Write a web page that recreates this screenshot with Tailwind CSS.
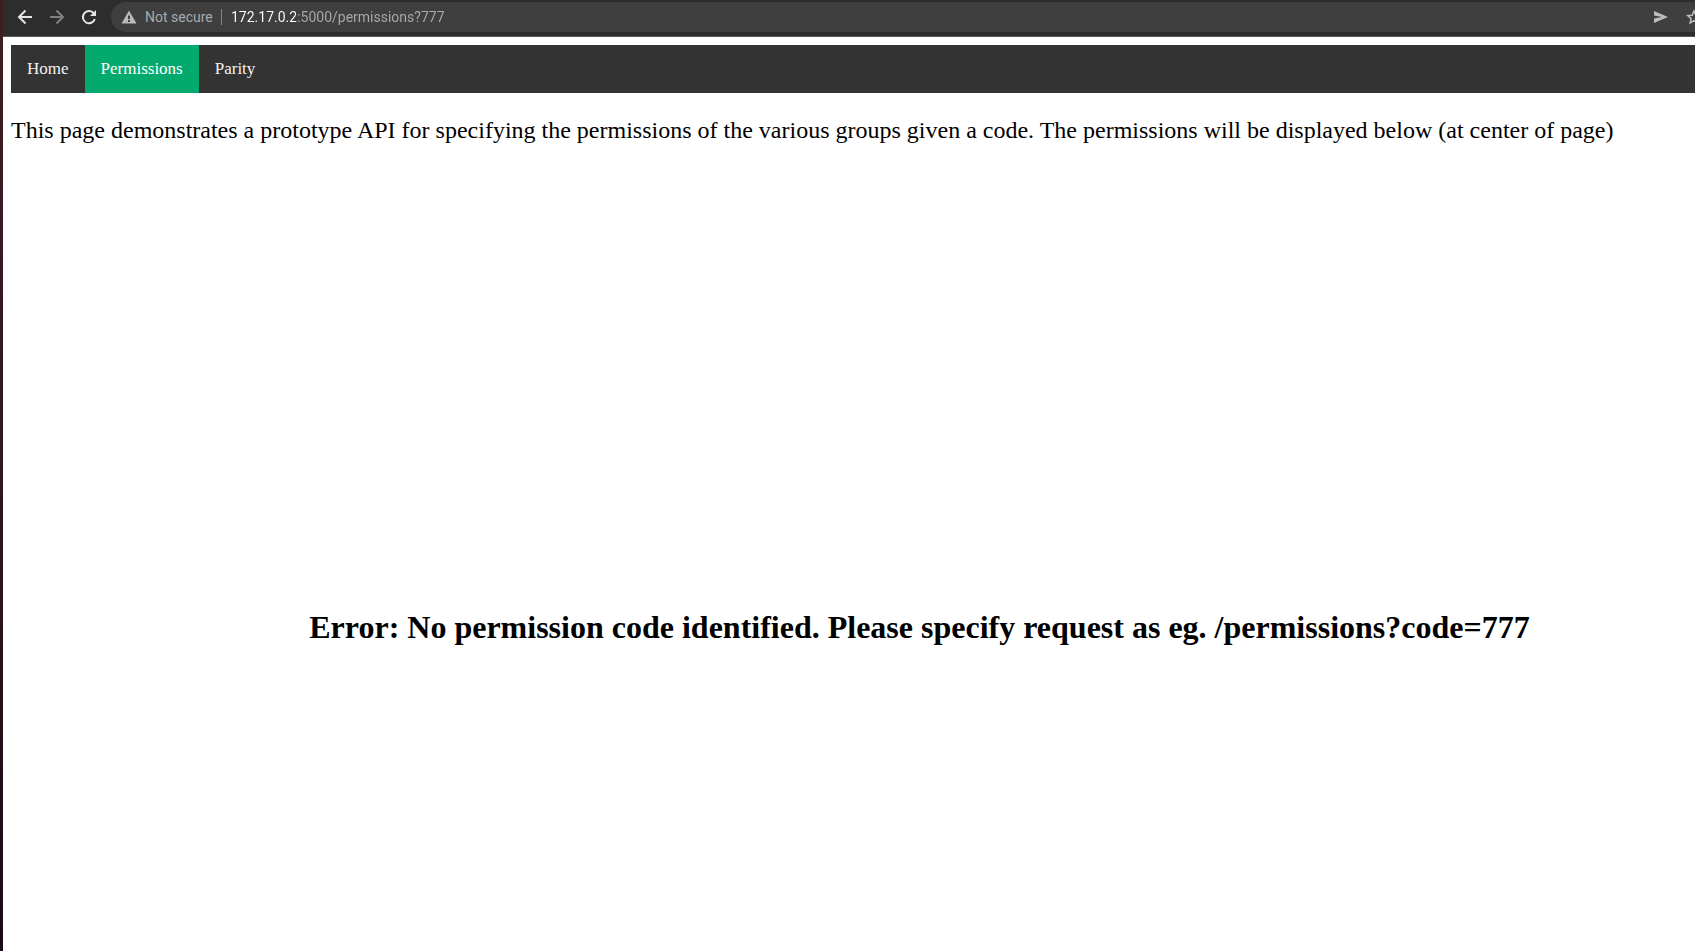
<!DOCTYPE html>
<html lang="en">
<head>
<meta charset="utf-8">
<title>Permissions</title>
<script src="https://cdn.jsdelivr.net/npm/@tailwindcss/browser@4"></script>
</head>
<body class="flex min-h-screen overflow-x-hidden bg-white font-['Liberation_Serif',serif] text-black">
  <div class="w-[3px] shrink-0 bg-linear-to-b from-[#401e20] via-[#32151f] to-[#180a18]"></div>
  <div class="flex min-w-0 flex-1 flex-col">
    <header class="flex h-[37px] items-start overflow-hidden border-b border-[#5a5a5a] bg-[#2d2d2d] pt-[2px] font-[Roboto,sans-serif] text-sm">
      <div class="flex h-[30px] shrink-0 items-center gap-3 pl-3">
        <button type="button" aria-label="Back" class="size-5 text-[#e4e4e4]">
          <svg viewBox="0 0 20 20" class="size-5" fill="none" stroke="currentColor" stroke-width="2"><path d="M17 10H4.500M10.500 3.500L4 10l6.500 6.500"/></svg>
        </button>
        <button type="button" aria-label="Forward" class="size-5 text-[#808080]">
          <svg viewBox="0 0 20 20" class="size-5" fill="none" stroke="currentColor" stroke-width="2"><path d="M3 10h12.500M9.500 3.500L16 10l-6.500 6.500"/></svg>
        </button>
        <button type="button" aria-label="Reload" class="size-5 text-[#e4e4e4]">
          <svg viewBox="0 0 20 20" class="size-5" fill="none" stroke="currentColor" stroke-width="2"><path d="M15.800 12a6.100 6.100 0 1 1-1.600-6.300L16 7.500"/><path d="M17 3v6h-6z" fill="currentColor" stroke="none"/></svg>
        </button>
      </div>
      <div class="ml-3 flex h-[30px] min-w-0 flex-1 items-center rounded-l-full bg-[#3f3f3f] pl-2.5">
        <svg viewBox="0 0 16 14" class="h-3.5 w-4 shrink-0 fill-[#b8babd]"><path fill-rule="evenodd" d="M8 .5L15.500 13.500H.5zM7 5.500v3.500h2V5.500zM7 10v2h2v-2z"/></svg>
        <span class="ml-2 w-[68px] shrink-0 whitespace-nowrap text-[#a8abae]">Not secure</span>
        <span class="ml-2 h-4 w-px shrink-0 bg-[#858585]"></span>
        <input aria-label="Address" value="172.17.0.2:5000/permissions?777" class="ml-[9px] min-w-0 flex-1 bg-linear-to-r from-white from-[65px] to-[#aaabad] to-[65px] bg-clip-text text-transparent outline-none">
        <button type="button" aria-label="Send" class="mr-[17px] size-4 shrink-0">
          <svg viewBox="0 0 16 16" class="size-4 fill-[#bdbdbd]"><path d="M1 2l14 6-14 6V9.500L9 8 1 6.500z"/></svg>
        </button>
        <button type="button" aria-label="Bookmark" class="-mr-[7px] size-4 shrink-0">
          <svg viewBox="0 0 16 16" class="size-4" fill="none" stroke="#bdbdbd" stroke-width="1.500"><path d="M8 2l1.800 4.200 4.500.4-3.400 3 1 4.400L8 11.700 4.100 14l1-4.400-3.400-3 4.500-.4z"/></svg>
        </button>
      </div>
    </header>
    <nav class="mt-2 ml-2 flex bg-[#333333] text-[17px] leading-5 text-[#f2f2f2]">
      <a href="#home" class="px-4 py-3.5">Home</a>
      <a href="#permissions" aria-current="page" class="bg-[#04aa6d] px-4 py-3.5 text-white">Permissions</a>
      <a href="#parity" class="px-4 py-3.5">Parity</a>
    </nav>
    <main class="flex flex-1 flex-col pl-2">
      <p class="mt-6 text-2xl leading-[26px]">This page demonstrates a prototype API for specifying the permissions of the various groups given a code. The permissions will be displayed below (at center of page)</p>
      <div class="flex flex-1 items-center justify-center pt-40 pl-[133px]">
        <h1 class="text-[32px] leading-9 font-bold">Error: No permission code identified. Please specify request as eg. /permissions?code=777</h1>
      </div>
    </main>
  </div>
</body>
</html>
